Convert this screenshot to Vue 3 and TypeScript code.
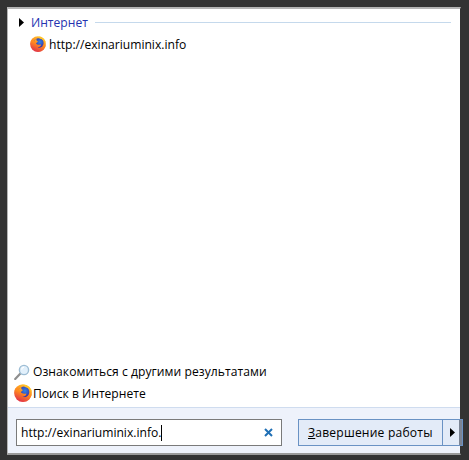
<template>
    <div class="start-menu">
        <div class="results">
            <div class="group-head">
                <svg class="arrow" width="5" height="9" viewBox="0 0 5 9"><path d="M0 0 L5 4.5 L0 9 Z" fill="#000" /></svg>
                <span class="group-title">Интернет</span>
                <span class="group-line"></span>
            </div>
            <div class="result-row">
                <svg class="fox" width="16" height="16" viewBox="0 0 16 16">
                    <use href="#fox-icon" />
                </svg>
                <span>http://exinariuminix.info</span>
            </div>
            <div class="spacer"></div>
            <div class="link-row link-row--more">
                <svg class="lens" width="16" height="16" viewBox="0 0 16 16">
                    <path d="M1.2 15 L6.4 9.4" stroke="#8f8f8f" stroke-width="2.2" stroke-linecap="round" />
                    <circle cx="10" cy="6" r="4.6" fill="#e2f0fb" stroke="#9dbdd4" stroke-width="1.4" />
                    <path d="M7.6 5.6 A2.8 2.8 0 0 1 10 3.2" fill="none" stroke="#fff" stroke-width="1.2" />
                </svg>
                <span>Ознакомиться с другими результатами</span>
            </div>
            <div class="link-row link-row--web">
                <svg class="fox" width="18" height="18" viewBox="0 0 16 16">
                    <use href="#fox-icon" />
                </svg>
                <span>Поиск в Интернете</span>
            </div>
        </div>
        <div class="footer">
            <div class="search-box">
                <span class="search-text">http://exinariuminix.info.</span>
                <span class="caret"></span>
                <svg class="clear" width="9" height="9" viewBox="0 0 9 9">
                    <path d="M1 1 L8 8 M8 1 L1 8" stroke="#1f6fb5" stroke-width="2" />
                </svg>
            </div>
            <div class="power">
                <span class="power-main"><u>З</u>авершение работы</span>
                <span class="power-more">
                    <svg width="5" height="9" viewBox="0 0 5 9"><path d="M0 0 L5 4.5 L0 9 Z" fill="#000" /></svg>
                </span>
            </div>
        </div>
        <svg class="defs" width="0" height="0">
            <defs>
                <radialGradient id="fox-globe" cx="0.6" cy="0.4" r="0.6">
                    <stop offset="0" stop-color="#2f86ea" />
                    <stop offset="1" stop-color="#3b2a9e" />
                </radialGradient>
                <linearGradient id="fox-tail" x1="0.75" y1="0" x2="0.25" y2="1">
                    <stop offset="0" stop-color="#ffd02e" />
                    <stop offset="0.45" stop-color="#ff8a1f" />
                    <stop offset="1" stop-color="#e02f4a" />
                </linearGradient>
                <symbol id="fox-icon" viewBox="0 0 16 16">
                    <circle cx="8" cy="8.1" r="7.9" fill="url(#fox-tail)" />
                    <circle cx="8.8" cy="7" r="4.8" fill="url(#fox-globe)" />
                    <path d="M1.4 3.4 C0 7 0.6 12.4 5 14.8 C9.6 17 15.4 13.8 15.8 8.4 C13.8 11.6 10 12.8 7.6 11.4 C10 11.2 11.4 9.6 10.8 8.4 C9 9 6.8 8.8 6 7.2 C7 6.6 7.6 6 8 5.2 C6.6 5 6.2 4 6.6 2.4 C5 3.2 4.4 4.4 4.2 5.4 C3 5 2 4.4 1.4 3.4 Z" fill="url(#fox-tail)" />
                    <path d="M9 0.6 C12.4 1 15.4 3.6 15.9 7.4 C14.4 4.4 12 3 9.6 2.6 Z" fill="#ffc22b" />
                </symbol>
            </defs>
        </svg>
    </div>
</template>

<script setup lang="ts">
</script>

<style>
html, body {
    margin: 0;
    background: #333333;
}
</style>

<style scoped>
.start-menu {
    box-sizing: border-box;
    width: 454px;
    height: 448px;
    margin: 7px 0 0 7px;
    display: flex;
    flex-direction: column;
    background: #fff;
    border-top: 2px solid #b4b4b4;
    border-left: 1px solid #b4b4b4;
    border-bottom: 2px solid #9a9a9a;
    border-right: 1px solid #333;
    font-family: "Open Sans", sans-serif;
    font-size: 12.1px;
    color: #000;
}

.results {
    flex: 1;
    display: flex;
    flex-direction: column;
}

.group-head {
    display: flex;
    align-items: center;
    height: 20px;
    margin-top: 3px;
    padding-left: 11px;
    padding-right: 9px;
}

.arrow {
    flex: none;
}

.group-title {
    margin-left: 7px;
    color: #2433b0;
}

.group-line {
    flex: 1;
    height: 1px;
    margin-left: 7px;
    background: #c5d9ec;
}

.result-row {
    display: flex;
    align-items: center;
    height: 24px;
    padding-left: 22px;
    gap: 3px;
}

.spacer {
    flex: 1;
}

.link-row {
    display: flex;
    align-items: center;
    padding-left: 6px;
}

.link-row--more {
    height: 19px;
    gap: 3px;
    letter-spacing: 0.06px;
}

.link-row--web {
    height: 24px;
    gap: 1px;
    margin-bottom: 2px;
}

.footer {
    box-sizing: border-box;
    height: 46px;
    flex: none;
    display: flex;
    align-items: flex-start;
    padding: 11px 0 0 8px;
    background: #eef2fb;
    border-top: 1px solid #cfdcef;
}

.search-box {
    box-sizing: border-box;
    flex: none;
    width: 266px;
    height: 27px;
    display: flex;
    align-items: center;
    padding-left: 4px;
    background: #fff;
    border: 1px solid #7a7a7a;
    position: relative;
}

.caret {
    width: 1px;
    height: 16px;
    background: #000;
}

.clear {
    position: absolute;
    right: 8px;
    top: 8px;
}

.power {
    box-sizing: border-box;
    flex: none;
    width: 165px;
    height: 27px;
    margin-left: 16px;
    display: flex;
    border: 1px solid #6a92c4;
    background: #e3ebf8;
}

.power-main {
    flex: 1;
    padding-left: 9px;
    line-height: 25px;
    border-right: 1px solid #6a92c4;
    letter-spacing: 0.2px;
}

.power-more {
    width: 19px;
    flex: none;
    display: flex;
    align-items: center;
    justify-content: center;
    background: linear-gradient(to right, #e3ebf8 16px, #7b8494 16px);
}

.defs {
    position: absolute;
}
</style>
